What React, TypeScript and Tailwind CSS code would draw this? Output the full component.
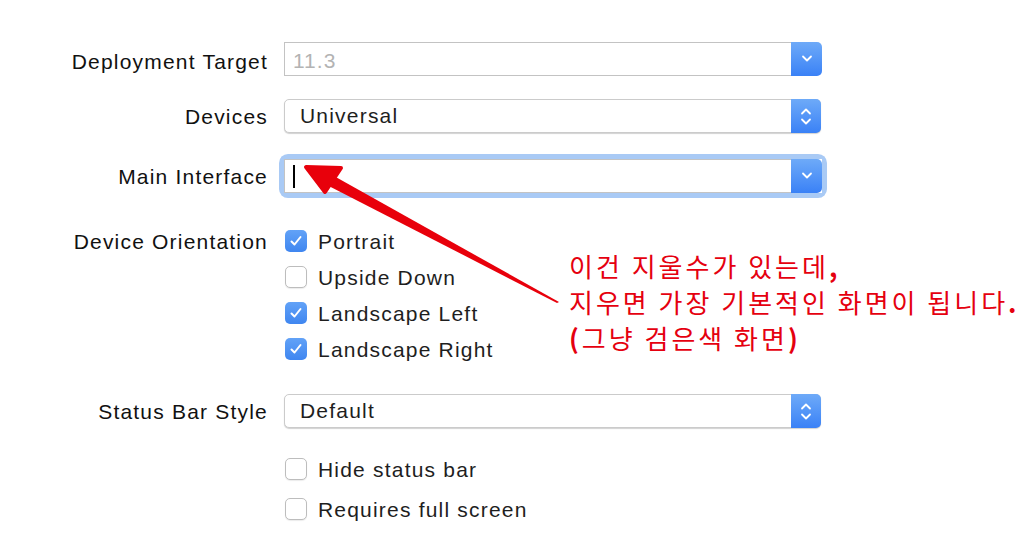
import React from "react";

const labelFont = { fontFamily: '"Liberation Sans", Arial, sans-serif' };

function Chevron({ up = false }: { up?: boolean }) {
    return (
        <svg width="12" height="8" viewBox="0 0 12 8" className="block">
            <path
                d={up ? "M2 6.5 L6 2.5 L10 6.5" : "M2 1.5 L6 5.5 L10 1.5"}
                fill="none"
                stroke="white"
                strokeWidth="1.8"
                strokeLinecap="round"
                strokeLinejoin="round"
            />
        </svg>
    );
}

function Combo({ value, muted, caret }: { value?: string; muted?: boolean; caret?: boolean }) {
    return (
        <div className="flex h-full w-[538px] bg-white">
            <div className="flex flex-1 items-center border border-[#c3c3c3] border-r-0 pl-[8px]">
                {caret && <div className="h-[23px] w-[2px] bg-black" />}
                {value && (
                    <span className={`pt-[4px] text-[21px] tracking-[1px] ${muted ? "text-[#b3b3b3]" : "text-[#1e1e1e]"}`}>{value}</span>
                )}
            </div>
            <div className="flex w-[31px] items-center justify-center rounded-r-[5px] bg-gradient-to-b from-[#6eaaf8] to-[#3a81f6]">
                <Chevron />
            </div>
        </div>
    );
}

function Popup({ value }: { value: string }) {
    return (
        <div className="flex h-full w-[537px] rounded-[5px] border border-[#cbcbcb] bg-white shadow-[0_1px_1px_rgba(0,0,0,0.18)]">
            <div className="flex flex-1 items-center pl-[15px] text-[21px] text-[#1e1e1e]">{value}</div>
            <div className="-my-px -mr-px flex w-[30px] flex-col items-center justify-center gap-[3px] rounded-r-[5px] bg-gradient-to-b from-[#6eaaf8] to-[#3a81f6]">
                <Chevron up />
                <Chevron />
            </div>
        </div>
    );
}

function Check({ on, label }: { on: boolean; label: string }) {
    return (
        <div className="flex items-center gap-[11px] pl-[1px]">
            {on ? (
                <div className="flex h-[22px] w-[22px] items-center justify-center rounded-[5px] bg-gradient-to-b from-[#62a2f7] to-[#3f86f0]">
                    <svg width="14" height="12" viewBox="0 0 14 12">
                        <path d="M2.5 6.5 L5.5 9.5 L11.5 2" fill="none" stroke="white" strokeWidth="2" strokeLinecap="round" strokeLinejoin="round" />
                    </svg>
                </div>
            ) : (
                <div className="h-[22px] w-[22px] rounded-[5px] border border-[#bdbdbd] bg-white shadow-[0_1px_1px_rgba(0,0,0,0.08)]" />
            )}
            <span className="pt-[2px] text-[21px] text-[#1e1e1e]">{label}</span>
        </div>
    );
}

function Label({ children }: { children: React.ReactNode }) {
    return <div className="w-[268px] shrink-0 pt-[2px] text-right text-[21px] text-[#111]">{children}</div>;
}

export default function App() {
    return (
        <div className="relative h-[544px] w-[1034px] overflow-hidden bg-white tracking-[1.2px]" style={labelFont}>
            <div className="flex flex-col pt-[42px]">
                <div className="flex h-[34px] items-center gap-[16px]">
                    <div className="pt-[4px]">
                        <Label>Deployment Target</Label>
                    </div>
                    <Combo value="11.3" muted />
                </div>
                <div className="mt-[23px] flex h-[34px] items-center gap-[16px]">
                    <Label>Devices</Label>
                    <Popup value="Universal" />
                </div>
                <div className="mt-[26px] flex h-[34px] items-center gap-[16px]">
                    <Label>Main Interface</Label>
                    <div className="h-full rounded-[4px] shadow-[0_0_0_5px_#a9caf5]">
                        <Combo caret />
                    </div>
                </div>
                <div className="mt-[30px] flex gap-[16px]">
                    <div className="flex h-[36px] items-center">
                        <Label>Device Orientation</Label>
                    </div>
                    <div className="flex flex-col">
                        {[
                            ["Portrait", true],
                            ["Upside Down", false],
                            ["Landscape Left", true],
                            ["Landscape Right", true],
                        ].map(([l, on]) => (
                            <div key={l as string} className="flex h-[36px] items-center">
                                <Check on={on as boolean} label={l as string} />
                            </div>
                        ))}
                    </div>
                </div>
                <div className="mt-[27px] flex h-[34px] items-center gap-[16px]">
                    <Label>Status Bar Style</Label>
                    <Popup value="Default" />
                </div>
                <div className="mt-[21px] flex flex-col pl-[284px]">
                    <div className="flex h-[40px] items-center">
                        <Check on={false} label="Hide status bar" />
                    </div>
                    <div className="flex h-[40px] items-center">
                        <Check on={false} label="Requires full screen" />
                    </div>
                </div>
            </div>

            {/* annotation */}
            <svg className="pointer-events-none absolute left-0 top-0" width="1034" height="544">
                <polygon points="319,181 325,171 559,302 557,303" fill="#e8000b" />
                <polygon points="306,167 341,168 325,192" fill="#e8000b" stroke="#e8000b" strokeWidth="4" strokeLinejoin="round" />
            </svg>
            <div
                className="absolute left-[569px] top-[248px] text-[26px] leading-[36px] tracking-[3px] text-[#e5000f]"
                style={{ fontFamily: '"Noto Sans CJK KR", "Liberation Sans", sans-serif' }}
            >
                <div>이건 지울수가 있는데<b>,</b></div>
                <div>지우면 가장 기본적인 화면이 됩니다<b>.</b></div>
                <div><b>(</b>그냥 검은색 화면<b>)</b></div>
            </div>
        </div>
    );
}
